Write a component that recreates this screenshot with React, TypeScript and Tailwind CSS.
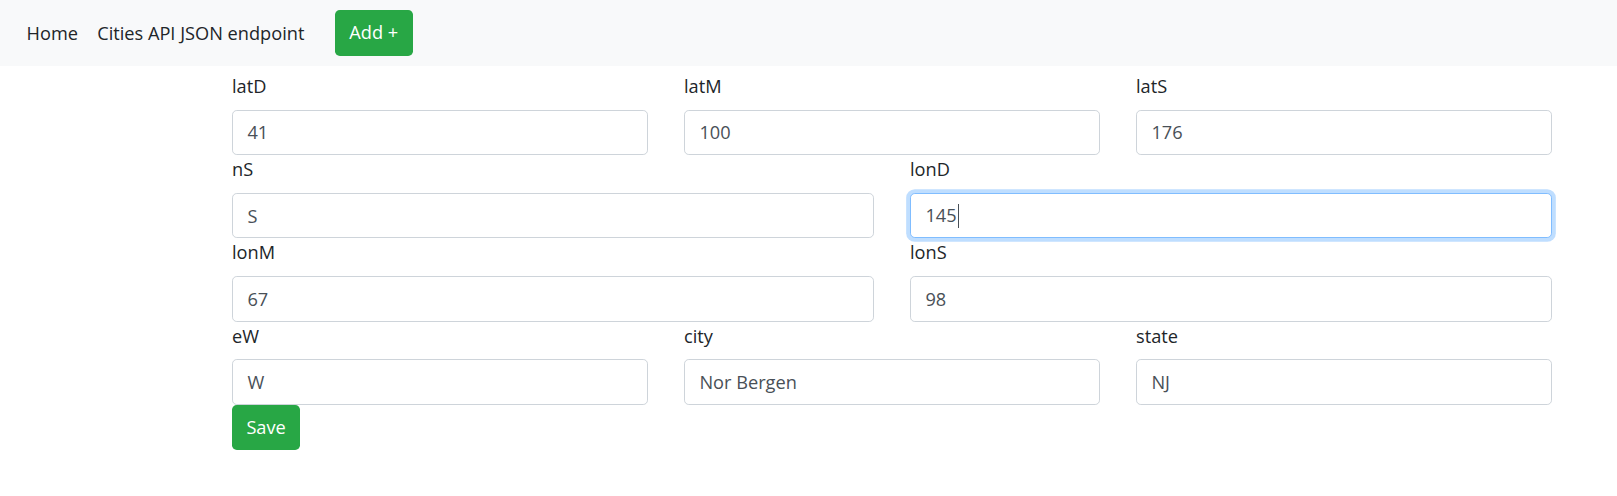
import React from "react";

const font = { fontFamily: '"Segoe UI", "Open Sans", "Noto Sans", sans-serif' };

function Field({ label, value, focused }: { label: string; value: string; focused?: boolean }) {
  return (
    <div className="flex flex-col">
      <label className="mb-[9.6px] text-[18.2px] leading-[28px] text-[#212529]">{label}</label>
      {focused ? (
        <div className="flex h-[45.6px] items-center rounded-[4.8px] border border-[#80bdff] bg-white px-[14.4px] text-[18.2px] text-[#495057] shadow-[0_0_0_3.84px_rgba(0,123,255,0.25)]">
          <span>{value}</span>
          <span className="ml-[1px] inline-block h-[24px] w-[1.5px] bg-[#495057]" />
        </div>
      ) : (
        <input
          readOnly
          value={value}
          className="h-[45.6px] w-full rounded-[4.8px] border border-[#ced4da] bg-white px-[14.4px] text-[18.2px] text-[#495057] outline-none"
        />
      )}
    </div>
  );
}

export default function App() {
  return (
    <div className="min-h-[496px] bg-white" style={font}>
      <nav className="flex h-[66px] items-center bg-[#f8f9fa] px-[17px]">
        <a className="px-[9.6px] text-[18.2px] leading-[28.8px] text-[#212529]">Home</a>
        <a className="px-[9.6px] text-[18.2px] leading-[28.8px] text-[#212529]">Cities API JSON endpoint</a>
        <button className="ml-[21px] h-[45.6px] rounded-[4.8px] bg-[#28a745] px-[14.4px] text-[18.2px] text-white">
          Add +
        </button>
      </nav>
      <div className="ml-[232px] w-[1320px] pt-[6px]">
        <div className="grid grid-cols-3 gap-x-[36px]">
          <Field label="latD" value="41" />
          <Field label="latM" value="100" />
          <Field label="latS" value="176" />
        </div>
        <div className="grid grid-cols-2 gap-x-[36px]">
          <Field label="nS" value="S" />
          <Field label="lonD" value="145" focused />
        </div>
        <div className="grid grid-cols-2 gap-x-[36px]">
          <Field label="lonM" value="67" />
          <Field label="lonS" value="98" />
        </div>
        <div className="grid grid-cols-3 gap-x-[36px]">
          <Field label="eW" value="W" />
          <Field label="city" value="Nor Bergen" />
          <Field label="state" value="NJ" />
        </div>
        <button className="h-[45.6px] rounded-[4.8px] bg-[#28a745] px-[14.4px] text-[18.2px] text-white">
          Save
        </button>
      </div>
    </div>
  );
}
